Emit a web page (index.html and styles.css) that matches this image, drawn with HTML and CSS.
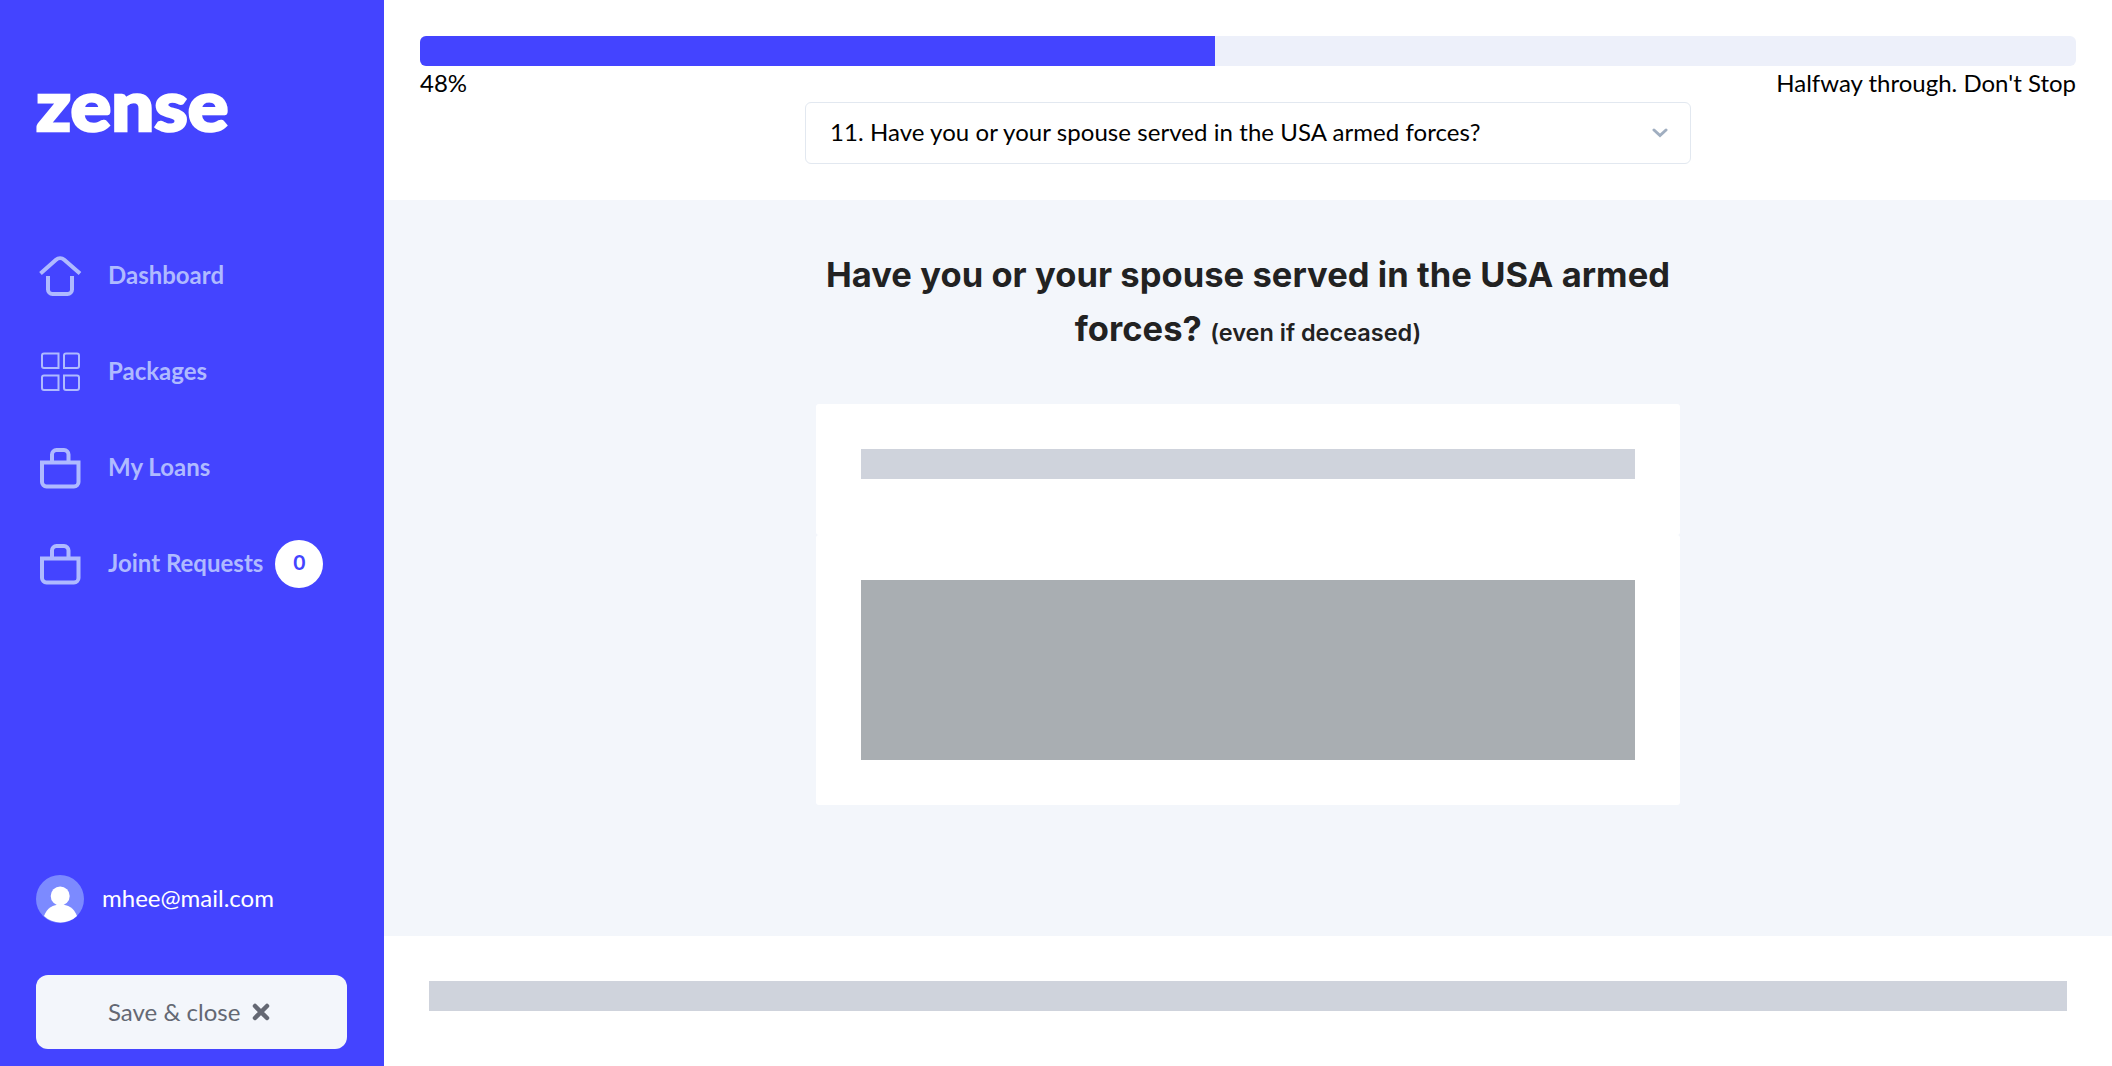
FILE: index.html
```html
<!DOCTYPE html>
<html lang="en">
<head>
<meta charset="utf-8">
<title>Zense</title>
<link rel="stylesheet" href="styles.css">
</head>
<body>
<div class="app">
  <aside class="sidebar">
    <div class="logo">zense</div>
    <nav class="nav">
      <a class="nav-item">
        <svg class="icon" viewBox="0 0 48 48"><path d="M4.500 21.500 20 7.700a6.200 6.200 0 0 1 8.200 0L44 21.500M12 24v13.500a4.500 4.500 0 0 0 4.500 4.500h15a4.500 4.500 0 0 0 4.500-4.500V24"/></svg>
        <span>Dashboard</span>
      </a>
      <a class="nav-item">
        <svg class="icon thin" viewBox="0 0 48 48"><path d="M8 5.500h14.500v14.500H8a2 2 0 0 1-2-2V7.500a2 2 0 0 1 2-2zM28 20V7.500a2 2 0 0 1 2-2h11a2 2 0 0 1 2 2V18a2 2 0 0 1-2 2zM6 29.500a2 2 0 0 1 2-2h14.500V42H8a2 2 0 0 1-2-2zM28 27.500h13a2 2 0 0 1 2 2V40a2 2 0 0 1-2 2H30a2 2 0 0 1-2-2z"/></svg>
        <span>Packages</span>
      </a>
      <a class="nav-item">
        <svg class="icon" viewBox="0 0 48 48"><path d="M6 18.500h36.500v19.500a4.500 4.500 0 0 1-4.500 4.500H10.500A4.500 4.500 0 0 1 6 38zM16 18.500V10.500a4.500 4.500 0 0 1 4.500-4.500H28a4.500 4.500 0 0 1 4.500 4.500v8"/></svg>
        <span>My Loans</span>
      </a>
      <a class="nav-item">
        <svg class="icon" viewBox="0 0 48 48"><path d="M6 18.500h36.500v19.500a4.500 4.500 0 0 1-4.500 4.500H10.500A4.500 4.500 0 0 1 6 38zM16 18.500V10.500a4.500 4.500 0 0 1 4.500-4.500H28a4.500 4.500 0 0 1 4.500 4.500v8"/></svg>
        <span>Joint Requests</span>
        <span class="badge">0</span>
      </a>
    </nav>
    <div class="user">
      <svg class="avatar" viewBox="0 0 48 48"><circle class="avatar-bg" cx="24" cy="24" r="24"/><circle cx="24.200" cy="21" r="9.500"/><path d="M8 41C11 33 17 29.500 24.500 29.500S38 33 41 41A24 24 0 0 1 8 41z"/></svg>
      <span>mhee@mail.com</span>
    </div>
    <button class="save">
      <span>Save &amp; close</span>
      <svg class="cross" viewBox="0 0 18 18"><path d="M3 3l12 12M15 3 3 15"/></svg>
    </button>
  </aside>
  <div class="main">
    <header class="header">
      <div class="progress"><div class="progress-fill" style="width:48%"></div></div>
      <div class="progress-text"><span>48%</span><span>Halfway through. Don't Stop</span></div>
      <div class="select">
        <span>11. Have you or your spouse served in the USA armed forces?</span>
        <svg class="chevron" viewBox="0 0 16 10"><path d="M2 2l6 5.500L14 2"/></svg>
      </div>
    </header>
    <main class="content">
      <h1 class="title"><span class="line">Have you or your spouse served in the USA armed</span> <span class="line">forces? <small class="hint">(even if deceased)</small></span></h1>
      <section class="card card-top"><div class="bar"></div></section>
      <section class="card card-body"><div class="block"></div></section>
    </main>
    <footer class="footer"><div class="bar"></div></footer>
  </div>
</div>
</body>
</html>
```
FILE: styles.css
```css
* { box-sizing: border-box; }

body {
  margin: 0;
  font: 24px/34px Lato, sans-serif;
  color: #000;
}

.app { display: flex; height: 1066px; overflow: hidden; }

.sidebar {
  display: flex;
  flex-direction: column;
  width: 384px;
  padding: 64px 36px 17px;
  background: #4444ff;
  color: #fff;
}

.logo {
  height: 80px;
  font-size: 70px;
  font-weight: 900;
  line-height: 80px;
  white-space: nowrap;
  transform: scaleX(1.085);
  transform-origin: left;
  -webkit-text-stroke: 2.5px #fff;
}

.nav { display: grid; gap: 48px; margin-top: 108px; }

.nav-item {
  display: flex;
  align-items: center;
  height: 48px;
  color: #afbaff;
  font-weight: 700;
  white-space: nowrap;
}

.nav-item > span:not(.badge) { padding-bottom: 2px; }

.icon {
  width: 48px;
  height: 48px;
  margin-right: 24px;
  fill: none;
  stroke: #afbaff;
  stroke-width: 4;
}

.thin { stroke-width: 2; }

.badge {
  width: 48px;
  height: 48px;
  margin-left: 12px;
  border-radius: 50%;
  background: #fff;
  color: #4444ff;
  font-size: 21px;
  line-height: 44px;
  text-align: center;
}

.user { display: flex; align-items: center; gap: 18px; margin-top: auto; }

.user > span { padding-bottom: 2px; }

.avatar { width: 48px; height: 48px; fill: #fff; }

.avatar-bg { fill: #7c8aff; }

.save {
  display: flex;
  align-items: center;
  height: 74px;
  width: 311px;
  margin-top: 52px;
  padding: 0 72px;
  gap: 12px;
  border: 0;
  border-radius: 12px;
  background: #f3f6fb;
  color: #646873;
  font: inherit;
  white-space: nowrap;
}

.cross { width: 18px; height: 18px; fill: none; stroke: #646873; stroke-width: 4.5; stroke-linecap: round; }

.main { flex: 1; display: flex; flex-direction: column; }

.header { height: 200px; padding: 36px 36px 0; }

.progress { height: 30px; border-radius: 6px; background: #edf0fa; overflow: hidden; }

.progress-fill { height: 100%; background: #4444ff; }

.progress-text { display: flex; justify-content: space-between; height: 36px; }

.select {
  display: flex;
  align-items: center;
  justify-content: space-between;
  width: 886px;
  height: 62px;
  margin: 0 auto;
  padding: 0 22px 0 24px;
  border: 1px solid #e2e8f0;
  border-radius: 6px;
}

.select > span { padding-bottom: 2px; letter-spacing: 0.06px; }

.chevron { width: 16px; height: 10px; fill: none; stroke: #a0aec0; stroke-width: 3; stroke-linecap: round; }

.content {
  display: flex;
  flex-direction: column;
  align-items: center;
  height: 736px;
  padding-top: 48px;
  background: #f3f6fb;
}

.title {
  height: 108px;
  margin: 0 0 48px;
  color: #222;
  font: 700 34.5px/54px Inter, sans-serif;
  letter-spacing: 0.06px;
  text-align: center;
}

.line { display: block; height: 54px; white-space: nowrap; }

.hint { font-size: 23.5px; font-weight: 600; line-height: 1; letter-spacing: 0; }

.card { width: 864px; padding: 45px; border-radius: 3px; background: #fff; }

.card-top { height: 131px; }

.card-body { height: 270px; }

.bar { height: 30px; background: #cfd3dc; }

.block { height: 180px; background: #a9aeb2; }

.footer { flex: 1; padding: 45px; }
```
